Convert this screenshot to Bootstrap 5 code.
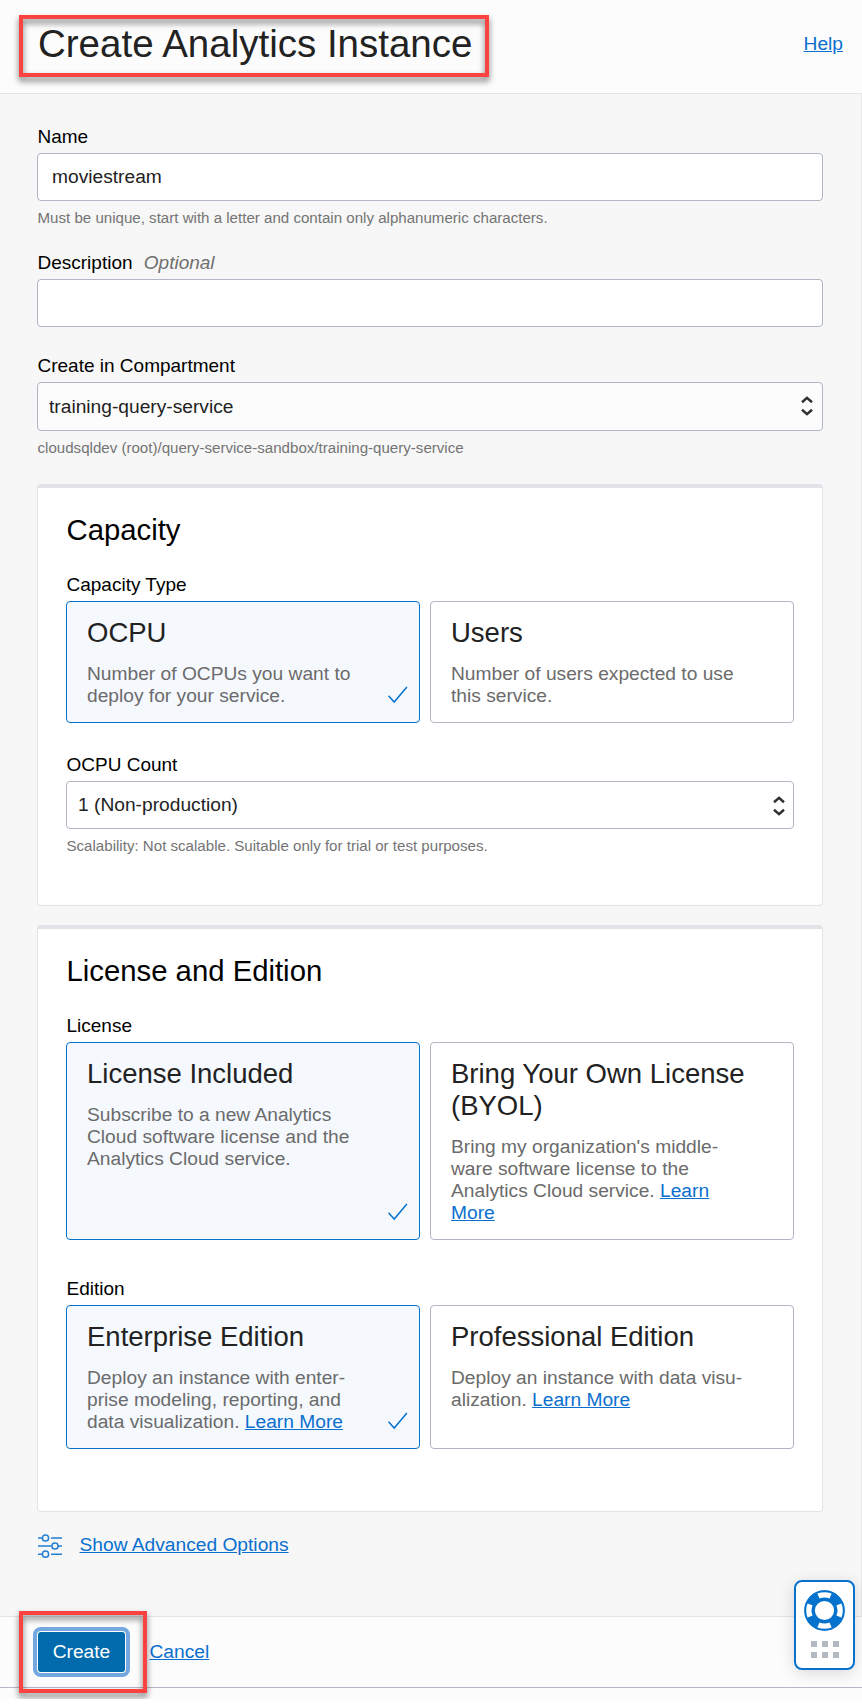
<!DOCTYPE html>
<html lang="en">
<head>
<meta charset="utf-8">
<title>Create Analytics Instance</title>
<link href="https://cdn.jsdelivr.net/npm/bootstrap@5.3.0/dist/css/bootstrap.min.css" rel="stylesheet">
<style>
  body { font-family: "Liberation Sans", Arial, sans-serif; font-size: 19.2px; line-height: 22px; color: #222; background: #fff; }
  a { color: #0a6fcf; text-underline-offset: auto; }
  .sheet { background: #f7f7f7; }
  .top-bar { height: 94px; background: #fcfcfc; border-bottom: 1px solid #e3e4e6; padding: 0 19px 5px 38px; }
  .top-bar h1 { font-size: 38.5px; line-height: 44px; margin: 0; }
  .main-pane { padding: 32px 38px 61px 37px; border-right: 1px solid #e9eaec; }
  .form-label { display: block; font-size: 19px; line-height: 22px; color: #000; margin: 0 0 5px .5px; }
  .form-label em { color: #6f6f6f; margin-left: 6px; }
  .form-control, .form-select { height: 48px; border: 1px solid #b0b7c3; border-radius: 4px; font-size: 19.2px; line-height: 22px; color: #222; padding: 0 14px; background-color: #fff; }
  .form-select { padding: 0 40px 0 11px; background-size: 12px 20px; background-position: right 8px top 14px;
    background-image: url("data:image/svg+xml,%3Csvg xmlns='http://www.w3.org/2000/svg' viewBox='0 0 12 20' fill='none' stroke='%23303030' stroke-width='2.5'%3E%3Cpath d='M1 6.300 6 1.900l5 4.400M1 13.700 6 18.100l5-4.400'/%3E%3C/svg%3E"); }
  .select-tall { height: 49px; padding-top: 1px; background-color: #fcfcfc; background-position: right 9px top 13px; }
  .hint { font-size: 15.1px; line-height: 18px; color: #747474; margin: 8px 0 0 .5px; }
  .panel { background: #fff; border: 1px solid #e2e3e6; border-top: 4px solid #e2e3e7; border-radius: 4px; padding: 25px 28px 50px; }
  .panel h2 { font-size: 29.3px; line-height: 34px; color: #000; margin: 0 0 27px .5px; }
  .panel-last { margin-top: 19px; padding-bottom: 62px; }
  .options { display: grid; grid-template-columns: 354px 364px; gap: 10px; }
  .choice { border: 1px solid #b0b7c3; border-radius: 4px; background: #fff; padding: 15px 12px 15px 20px; white-space: nowrap; }
  .choice h3 { font-size: 27.5px; line-height: 32px; margin: 0 0 14px; color: #222; }
  .choice p { margin: 0; color: #6b6b6b; }
  .choice.picked { border-color: #0572ce; background: #f5f9fe; }
  .tick { right: 11px; bottom: 18px; }
  .bottom-bar { height: 72px; background: #fcfcfc; border-top: 1px solid #e3e4e6; border-bottom: 1px solid #b3bac6; padding: 0 38px 1px; }
  .create-btn { width: 87px; height: 40px; border-radius: 3px; border: 0; padding: 0; font-size: 19.2px; line-height: 22px; color: #fff; background: #026bad; box-shadow: 0 0 0 1px #fff, 0 0 0 5px #74a7df; }
  .create-btn:hover { background: #026bad; color: #fff; }
  .callout { border: 4px solid #fe4141; filter: drop-shadow(0 4px 3px rgba(0,0,0,.55)); pointer-events: none; }
  .callout-title { left: 19px; top: 15px; width: 470px; height: 62px; }
  .callout-create { left: 19px; top: -6px; width: 128px; height: 82px; }
  .help-widget { left: 794px; top: -37px; width: 61px; height: 90px; border: 2px solid #0572ce; border-radius: 8px; background: #fff; box-shadow: 0 3px 16px rgba(0,0,0,.14); }
  .tail { height: 11px; background: #fcfcfc; }
</style>
</head>
<body>
<div class="sheet overflow-hidden">
  <header class="top-bar position-relative d-flex align-items-center justify-content-between">
    <h1 class="fw-normal">Create Analytics Instance</h1>
    <a href="#">Help</a>
    <div class="callout callout-title position-absolute"></div>
  </header>

  <main class="main-pane">
    <label class="form-label" for="name">Name</label>
    <input class="form-control" id="name" value="moviestream">
    <p class="hint">Must be unique, start with a letter and contain only alphanumeric characters.</p>

    <label class="form-label" for="desc" style="margin-top:25px">Description <em>Optional</em></label>
    <input class="form-control" id="desc">

    <label class="form-label" for="comp" style="margin-top:28px">Create in Compartment</label>
    <select class="form-select select-tall" id="comp"><option>training-query-service</option></select>
    <p class="hint">cloudsqldev (root)/query-service-sandbox/training-query-service</p>

    <section class="panel" style="margin-top:27px">
      <h2 class="fw-normal">Capacity</h2>
      <div class="form-label">Capacity Type</div>
      <div class="options">
        <div class="choice picked position-relative">
          <h3 class="fw-normal">OCPU</h3>
          <p>Number of OCPUs you want to<br>deploy for your service.</p>
          <svg class="tick position-absolute" width="20" height="18" viewBox="0 0 20 18" fill="none" stroke="#0572ce" stroke-width="1.5"><path d="M.5 9.700 6.200 16 18.900 1"/></svg>
        </div>
        <div class="choice">
          <h3 class="fw-normal">Users</h3>
          <p>Number of users expected to use<br>this service.</p>
        </div>
      </div>
      <label class="form-label" for="count" style="margin-top:31px">OCPU Count</label>
      <select class="form-select" id="count"><option>1 (Non-production)</option></select>
      <p class="hint">Scalability: Not scalable. Suitable only for trial or test purposes.</p>
    </section>

    <section class="panel panel-last">
      <h2 class="fw-normal">License and Edition</h2>
      <div class="form-label">License</div>
      <div class="options">
        <div class="choice picked position-relative">
          <h3 class="fw-normal">License Included</h3>
          <p>Subscribe to a new Analytics<br>Cloud software license and the<br>Analytics Cloud service.</p>
          <svg class="tick position-absolute" width="20" height="18" viewBox="0 0 20 18" fill="none" stroke="#0572ce" stroke-width="1.5"><path d="M.5 9.700 6.200 16 18.900 1"/></svg>
        </div>
        <div class="choice">
          <h3 class="fw-normal">Bring Your Own License<br>(BYOL)</h3>
          <p>Bring my organization's middle-<br>ware software license to the<br>Analytics Cloud service. <a href="#">Learn<br>More</a></p>
        </div>
      </div>
      <div class="form-label" style="margin-top:38px">Edition</div>
      <div class="options">
        <div class="choice picked position-relative">
          <h3 class="fw-normal">Enterprise Edition</h3>
          <p>Deploy an instance with enter-<br>prise modeling, reporting, and<br>data visualization. <a href="#">Learn More</a></p>
          <svg class="tick position-absolute" width="20" height="18" viewBox="0 0 20 18" fill="none" stroke="#0572ce" stroke-width="1.5"><path d="M.5 9.700 6.200 16 18.900 1"/></svg>
        </div>
        <div class="choice">
          <h3 class="fw-normal">Professional Edition</h3>
          <p>Deploy an instance with data visu-<br>alization. <a href="#">Learn More</a></p>
        </div>
      </div>
    </section>

    <div class="d-flex" style="margin-top:21px;height:22px">
      <svg class="flex-shrink-0" width="26" height="26" viewBox="0 0 26 26" fill="none" stroke="#2580d2" stroke-width="1.5" style="margin-right:16.5px"><path d="M1 5h4.200M12 5h0M14 5h11M1 13h13.500M21 13h4M1 21.200h4.200M14 21.200h11"/><circle cx="8.500" cy="5" r="3.100"/><circle cx="18" cy="13" r="3.100"/><circle cx="8.500" cy="21.200" r="3.100"/></svg>
      <a class="mt-px" href="#" style="padding-top:1px">Show Advanced Options</a>
    </div>
  </main>

  <footer class="bottom-bar position-relative d-flex align-items-center">
    <button class="btn create-btn">Create</button>
    <a href="#" style="margin-left:24.5px">Cancel</a>
    <div class="callout callout-create position-absolute"></div>
    <div class="help-widget position-absolute">
      <svg class="d-block" width="57" height="86" viewBox="0 0 57 86">
        <circle cx="28.500" cy="28.500" r="15" fill="none" stroke="#0572ce" stroke-width="10"/>
        <g fill="none" stroke="#fff" stroke-width="6.500">
          <path d="M22.200 13.600A16 16 0 0 1 34.800 13.600M22.200 43.400A16 16 0 0 0 34.800 43.400M13.600 22.200A16 16 0 0 0 13.600 34.800M43.400 22.200A16 16 0 0 1 43.400 34.800"/>
        </g>
        <circle cx="28.500" cy="28.500" r="19.300" fill="none" stroke="#0572ce" stroke-width="2"/>
        <circle cx="28.500" cy="28.500" r="10.600" fill="#fff" stroke="#0572ce" stroke-width="2"/>
        <path fill="#b3b9c1" d="M15 59h6v6h-6zM26 59h6v6h-6zM37 59h6v6h-6zM15 70h6v6h-6zM26 70h6v6h-6zM37 70h6v6h-6z"/>
      </svg>
    </div>
  </footer>
  <div class="tail"></div>
</div>
<script src="https://cdn.jsdelivr.net/npm/bootstrap@5.3.0/dist/js/bootstrap.bundle.min.js"></script>
</body>
</html>
